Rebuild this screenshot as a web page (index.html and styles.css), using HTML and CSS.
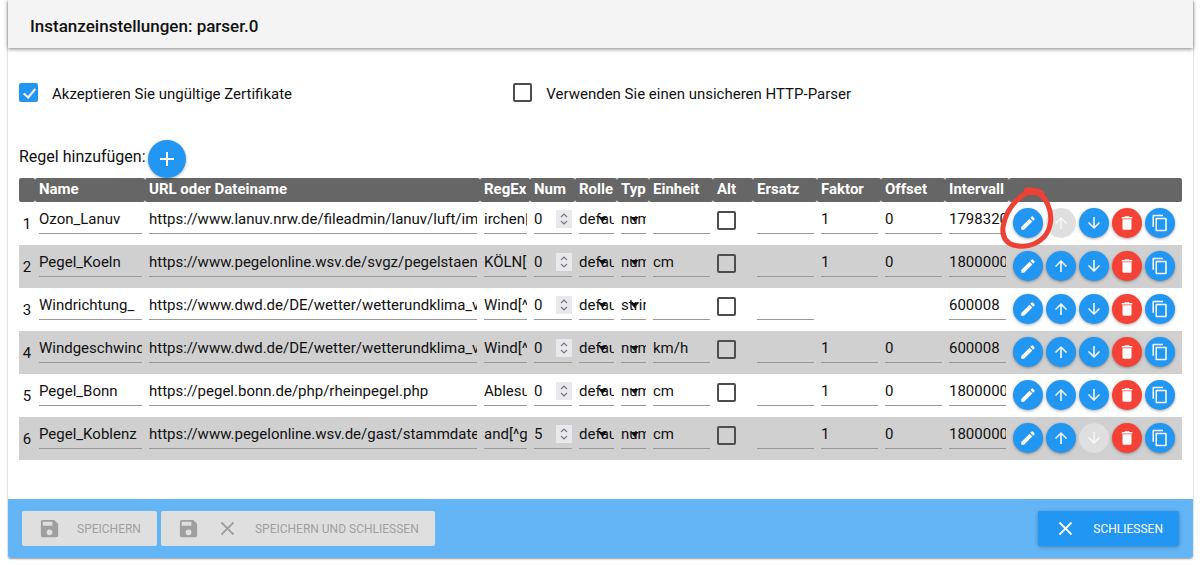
FILE: index.html
```html
<!DOCTYPE html>
<html lang="de">
<head>
<meta charset="utf-8">
<title>Instanzeinstellungen: parser.0</title>
<link rel="stylesheet" href="styles.css">
</head>
<body>
<svg class="sprite" aria-hidden="true">
  <symbol id="edit" viewBox="0 0 24 24"><path d="M3 17.25V21h3.75L17.81 9.94l-3.75-3.75L3 17.25zM20.71 7.04a1 1 0 0 0 0-1.41l-2.34-2.34a1 1 0 0 0-1.41 0l-1.83 1.83 3.75 3.75 1.83-1.83z"/></symbol>
  <symbol id="up" viewBox="0 0 24 24"><path d="M4 12l1.41 1.41L11 7.83V20h2V7.83l5.58 5.59L20 12l-8-8-8 8z"/></symbol>
  <symbol id="down" viewBox="0 0 24 24"><path d="M20 12l-1.41-1.41L13 16.17V4h-2v12.17l-5.58-5.59L4 12l8 8 8-8z"/></symbol>
  <symbol id="trash" viewBox="0 0 24 24"><path d="M6 19a2 2 0 0 0 2 2h8a2 2 0 0 0 2-2V7H6v12zM19 4h-3.5l-1-1h-5l-1 1H5v2h14V4z"/></symbol>
  <symbol id="copy" viewBox="0 0 24 24"><path d="M16 1H3a1 1 0 0 0-1 1v15h2V3h12V1zm4 4H7a1 1 0 0 0-1 1v16a1 1 0 0 0 1 1h13a1 1 0 0 0 1-1V6a1 1 0 0 0-1-1zm-1 16H8V7h11v14z"/></symbol>
  <symbol id="plus" viewBox="0 0 24 24"><path d="M19 13h-6v6h-2v-6H5v-2h6V5h2v6h6v2z"/></symbol>
  <symbol id="save" viewBox="0 0 24 24"><path d="M17 3H5a2 2 0 0 0-2 2v14a2 2 0 0 0 2 2h14a2 2 0 0 0 2-2V7l-4-4zm-5 16a3 3 0 1 1 0-6 3 3 0 0 1 0 6zm3-10H5V5h10v4z"/></symbol>
  <symbol id="close" viewBox="0 0 24 24"><path d="M19 6.41L17.59 5 12 10.59 6.41 5 5 6.41 10.59 12 5 17.59 6.41 19 12 13.41 17.59 19 19 17.59 13.41 12z"/></symbol>
  <symbol id="spin" viewBox="0 0 16 18"><path d="M5 7l3-3 3 3M5 11l3 3 3-3" fill="none" stroke="#77777c" stroke-width="1.2"/></symbol>
  <symbol id="caret" viewBox="0 0 10 6"><path d="M0 0h10L5 6z"/></symbol>
</svg>
<main class="card">
  <header class="title"><h1>Instanzeinstellungen: parser.0</h1></header>
  <section class="content">
    <div class="options">
      <label class="option"><input class="check" type="checkbox" checked><span>Akzeptieren Sie ungültige Zertifikate</span></label>
      <label class="option"><input class="check" type="checkbox"><span>Verwenden Sie einen unsicheren HTTP-Parser</span></label>
    </div>
    <div class="add"><span id="add-label">Regel hinzufügen:</span><button class="round large" aria-labelledby="add-label"><svg><use href="#plus"/></svg></button></div>
    <table class="rules">
      <colgroup><col class="c-no"><col class="c-name"><col><col class="c-regex"><col class="c-num"><col class="c-role"><col class="c-type"><col class="c-std"><col class="c-alt"><col class="c-std"><col class="c-std"><col class="c-std"><col class="c-std"><col class="c-actions"></colgroup>
      <thead>
        <tr><th></th><th>Name</th><th>URL oder Dateiname</th><th>RegEx</th><th>Num</th><th>Rolle</th><th>Typ</th><th>Einheit</th><th>Alt</th><th>Ersatz</th><th>Faktor</th><th>Offset</th><th>Intervall</th><th></th></tr>
      </thead>
      <tbody>
        <tr>
          <td class="no">1</td>
          <td><input class="field" aria-label="Name" value="Ozon_Lanuv"></td>
          <td><input class="field" aria-label="URL oder Dateiname" value="https://www.lanuv.nrw.de/fileadmin/lanuv/luft/immissionen/aktluftqual/eu_luftqualitaet.htm"></td>
          <td><input class="field" aria-label="RegEx" value="irchen|"></td>
          <td><div class="wrap"><input class="field" type="number" aria-label="Num" value="0"><svg class="spin"><use href="#spin"/></svg></div></td>
          <td><div class="wrap"><select class="field" aria-label="Rolle"><option>default</option></select><svg class="caret"><use href="#caret"/></svg></div></td>
          <td><div class="wrap"><select class="field" aria-label="Typ"><option>number</option></select><svg class="caret"><use href="#caret"/></svg></div></td>
          <td><input class="field" aria-label="Einheit" value=""></td>
          <td><input class="check" type="checkbox" aria-label="Alt"></td>
          <td><input class="field" aria-label="Ersatz" value=""></td>
          <td><input class="field" aria-label="Faktor" value="1"></td>
          <td><input class="field" aria-label="Offset" value="0"></td>
          <td><input class="field" aria-label="Intervall" value="17983200"></td>
          <td><div class="actions"><button class="round" aria-label="Bearbeiten"><svg><use href="#edit"/></svg></button><button class="round" aria-label="Nach oben" disabled><svg><use href="#up"/></svg></button><button class="round" aria-label="Nach unten"><svg><use href="#down"/></svg></button><button class="round red" aria-label="Löschen"><svg><use href="#trash"/></svg></button><button class="round" aria-label="Kopieren"><svg><use href="#copy"/></svg></button>
            <svg class="marker" viewBox="0 0 54 64" aria-hidden="true"><path d="M42 7C36 3 29 5 23 9C12 17 5 29 3 41C2 50 5 56 13 59C25 62 36 59 44 51C51 43 53 31 48 19C45 11 39 6 31 4C26 3 24 5 29 6C34 8 38 5 41 7"/></svg></div></td>
        </tr>
        <tr>
          <td class="no">2</td>
          <td><input class="field" aria-label="Name" value="Pegel_Koeln"></td>
          <td><input class="field" aria-label="URL oder Dateiname" value="https://www.pegelonline.wsv.de/svgz/pegelstaende_neu.svgz"></td>
          <td><input class="field" aria-label="RegEx" value="KÖLN[^"></td>
          <td><div class="wrap"><input class="field" type="number" aria-label="Num" value="0"><svg class="spin"><use href="#spin"/></svg></div></td>
          <td><div class="wrap"><select class="field" aria-label="Rolle"><option>default</option></select><svg class="caret"><use href="#caret"/></svg></div></td>
          <td><div class="wrap"><select class="field" aria-label="Typ"><option>number</option></select><svg class="caret"><use href="#caret"/></svg></div></td>
          <td><input class="field" aria-label="Einheit" value="cm"></td>
          <td><input class="check" type="checkbox" aria-label="Alt"></td>
          <td><input class="field" aria-label="Ersatz" value=""></td>
          <td><input class="field" aria-label="Faktor" value="1"></td>
          <td><input class="field" aria-label="Offset" value="0"></td>
          <td><input class="field" aria-label="Intervall" value="18000000"></td>
          <td><div class="actions"><button class="round" aria-label="Bearbeiten"><svg><use href="#edit"/></svg></button><button class="round" aria-label="Nach oben"><svg><use href="#up"/></svg></button><button class="round" aria-label="Nach unten"><svg><use href="#down"/></svg></button><button class="round red" aria-label="Löschen"><svg><use href="#trash"/></svg></button><button class="round" aria-label="Kopieren"><svg><use href="#copy"/></svg></button></div></td>
        </tr>
        <tr>
          <td class="no">3</td>
          <td><input class="field" aria-label="Name" value="Windrichtung_"></td>
          <td><input class="field" aria-label="URL oder Dateiname" value="https://www.dwd.de/DE/wetter/wetterundklima_vorort/"></td>
          <td><input class="field" aria-label="RegEx" value="Wind[^"></td>
          <td><div class="wrap"><input class="field" type="number" aria-label="Num" value="0"><svg class="spin"><use href="#spin"/></svg></div></td>
          <td><div class="wrap"><select class="field" aria-label="Rolle"><option>default</option></select><svg class="caret"><use href="#caret"/></svg></div></td>
          <td><div class="wrap"><select class="field" aria-label="Typ"><option>string</option></select><svg class="caret"><use href="#caret"/></svg></div></td>
          <td><input class="field" aria-label="Einheit" value=""></td>
          <td><input class="check" type="checkbox" aria-label="Alt"></td>
          <td><input class="field" aria-label="Ersatz" value=""></td>
          <td></td>
          <td></td>
          <td><input class="field" aria-label="Intervall" value="600008"></td>
          <td><div class="actions"><button class="round" aria-label="Bearbeiten"><svg><use href="#edit"/></svg></button><button class="round" aria-label="Nach oben"><svg><use href="#up"/></svg></button><button class="round" aria-label="Nach unten"><svg><use href="#down"/></svg></button><button class="round red" aria-label="Löschen"><svg><use href="#trash"/></svg></button><button class="round" aria-label="Kopieren"><svg><use href="#copy"/></svg></button></div></td>
        </tr>
        <tr>
          <td class="no">4</td>
          <td><input class="field" aria-label="Name" value="Windgeschwindigkeit"></td>
          <td><input class="field" aria-label="URL oder Dateiname" value="https://www.dwd.de/DE/wetter/wetterundklima_vorort/"></td>
          <td><input class="field" aria-label="RegEx" value="Wind[^"></td>
          <td><div class="wrap"><input class="field" type="number" aria-label="Num" value="0"><svg class="spin"><use href="#spin"/></svg></div></td>
          <td><div class="wrap"><select class="field" aria-label="Rolle"><option>default</option></select><svg class="caret"><use href="#caret"/></svg></div></td>
          <td><div class="wrap"><select class="field" aria-label="Typ"><option>number</option></select><svg class="caret"><use href="#caret"/></svg></div></td>
          <td><input class="field" aria-label="Einheit" value="km/h"></td>
          <td><input class="check" type="checkbox" aria-label="Alt"></td>
          <td><input class="field" aria-label="Ersatz" value=""></td>
          <td><input class="field" aria-label="Faktor" value="1"></td>
          <td><input class="field" aria-label="Offset" value="0"></td>
          <td><input class="field" aria-label="Intervall" value="600008"></td>
          <td><div class="actions"><button class="round" aria-label="Bearbeiten"><svg><use href="#edit"/></svg></button><button class="round" aria-label="Nach oben"><svg><use href="#up"/></svg></button><button class="round" aria-label="Nach unten"><svg><use href="#down"/></svg></button><button class="round red" aria-label="Löschen"><svg><use href="#trash"/></svg></button><button class="round" aria-label="Kopieren"><svg><use href="#copy"/></svg></button></div></td>
        </tr>
        <tr>
          <td class="no">5</td>
          <td><input class="field" aria-label="Name" value="Pegel_Bonn"></td>
          <td><input class="field" aria-label="URL oder Dateiname" value="https://pegel.bonn.de/php/rheinpegel.php"></td>
          <td><input class="field" aria-label="RegEx" value="Ablesung"></td>
          <td><div class="wrap"><input class="field" type="number" aria-label="Num" value="0"><svg class="spin"><use href="#spin"/></svg></div></td>
          <td><div class="wrap"><select class="field" aria-label="Rolle"><option>default</option></select><svg class="caret"><use href="#caret"/></svg></div></td>
          <td><div class="wrap"><select class="field" aria-label="Typ"><option>number</option></select><svg class="caret"><use href="#caret"/></svg></div></td>
          <td><input class="field" aria-label="Einheit" value="cm"></td>
          <td><input class="check" type="checkbox" aria-label="Alt"></td>
          <td><input class="field" aria-label="Ersatz" value=""></td>
          <td><input class="field" aria-label="Faktor" value="1"></td>
          <td><input class="field" aria-label="Offset" value="0"></td>
          <td><input class="field" aria-label="Intervall" value="18000000"></td>
          <td><div class="actions"><button class="round" aria-label="Bearbeiten"><svg><use href="#edit"/></svg></button><button class="round" aria-label="Nach oben"><svg><use href="#up"/></svg></button><button class="round" aria-label="Nach unten"><svg><use href="#down"/></svg></button><button class="round red" aria-label="Löschen"><svg><use href="#trash"/></svg></button><button class="round" aria-label="Kopieren"><svg><use href="#copy"/></svg></button></div></td>
        </tr>
        <tr>
          <td class="no">6</td>
          <td><input class="field" aria-label="Name" value="Pegel_Koblenz"></td>
          <td><input class="field" aria-label="URL oder Dateiname" value="https://www.pegelonline.wsv.de/gast/stammdaten?pegelnr=25900700"></td>
          <td><input class="field" aria-label="RegEx" value="and[^g"></td>
          <td><div class="wrap"><input class="field" type="number" aria-label="Num" value="5"><svg class="spin"><use href="#spin"/></svg></div></td>
          <td><div class="wrap"><select class="field" aria-label="Rolle"><option>default</option></select><svg class="caret"><use href="#caret"/></svg></div></td>
          <td><div class="wrap"><select class="field" aria-label="Typ"><option>number</option></select><svg class="caret"><use href="#caret"/></svg></div></td>
          <td><input class="field" aria-label="Einheit" value="cm"></td>
          <td><input class="check" type="checkbox" aria-label="Alt"></td>
          <td><input class="field" aria-label="Ersatz" value=""></td>
          <td><input class="field" aria-label="Faktor" value="1"></td>
          <td><input class="field" aria-label="Offset" value="0"></td>
          <td><input class="field" aria-label="Intervall" value="18000000"></td>
          <td><div class="actions"><button class="round" aria-label="Bearbeiten"><svg><use href="#edit"/></svg></button><button class="round" aria-label="Nach oben"><svg><use href="#up"/></svg></button><button class="round" aria-label="Nach unten" disabled><svg><use href="#down"/></svg></button><button class="round red" aria-label="Löschen"><svg><use href="#trash"/></svg></button><button class="round" aria-label="Kopieren"><svg><use href="#copy"/></svg></button></div></td>
        </tr>
      </tbody>
    </table>
  </section>
  <footer class="footer">
    <button class="btn" disabled><svg><use href="#save"/></svg><span>SPEICHERN</span></button>
    <button class="btn" disabled><svg><use href="#save"/></svg><svg><use href="#close"/></svg><span>SPEICHERN UND SCHLIESSEN</span></button>
    <button class="btn primary"><svg><use href="#close"/></svg><span>SCHLIESSEN</span></button>
  </footer>
</main>
</body>
</html>
```
FILE: styles.css
```css
* { box-sizing: border-box; }
body {
  margin: 0;
  padding: 0 7px 7px 8px;
  background: #fff;
  color: #111;
  font: 15px/20px Roboto, "Liberation Sans", sans-serif;
}
button, input, select { font: inherit; color: inherit; margin: 0; }
svg { display: block; fill: currentColor; }
.sprite { display: none; }

.card {
  border-radius: 0 0 3px 3px;
  box-shadow: 0 1px 2px rgba(0, 0, 0, .4);
}
.title {
  padding: 16px 22px 12px;
  background: #f4f4f4;
  box-shadow: 0 1px 4px rgba(0, 0, 0, .5);
}
.title h1 { margin: 0; font-size: 17px; line-height: 20px; font-weight: 500; }

.content { padding: 35px 11px 39px; }
.options { display: grid; grid-template-columns: 17fr 23fr; }
.option { display: flex; align-items: flex-start; gap: 14px; }
.option span { padding-top: 1px; }

.check {
  appearance: none;
  display: block;
  flex: none;
  width: 19px;
  height: 19px;
  border: 2px solid #4d4d4d;
  border-radius: 2px;
}
.check:checked { border-color: #2196f3; background: #2196f3; }
.check:checked::after {
  content: "";
  display: block;
  width: 5px;
  height: 10px;
  margin: 1px 0 0 5px;
  border: solid #fff;
  border-width: 0 2px 2px 0;
  transform: rotate(40deg);
}

.add { display: flex; align-items: center; gap: 2px; padding-top: 36px; font-size: 16px; }
.add span { padding-bottom: 4px; }

.round {
  display: flex;
  flex: none;
  align-items: center;
  justify-content: center;
  width: 30px;
  height: 30px;
  padding: 0;
  border: 0;
  border-radius: 50%;
  background: #2196f3;
  color: #fff;
  box-shadow: 0 1px 3px rgba(0, 0, 0, .35);
}
.round svg { width: 18px; height: 18px; }
.round.large { width: 38px; height: 38px; }
.round.large svg { width: 24px; height: 24px; }
.round.red { background: #f44336; }
.round:disabled { background: #dfdfdf; color: #f8f8f8; box-shadow: none; }

.rules { width: 100%; table-layout: fixed; border-collapse: separate; border-spacing: 0; }
.c-no { width: 16px; }
.c-name { width: 110px; }
.c-regex { width: 50px; }
.c-num { width: 45px; }
.c-role { width: 42px; }
.c-type { width: 32px; }
.c-std { width: 64px; }
.c-alt { width: 40px; }
.c-actions { width: 173px; }
.rules th {
  height: 24px;
  padding: 0 0 2px 4px;
  border-radius: 2px;
  background: #666;
  color: #fff;
  font-weight: 700;
  text-align: left;
  white-space: nowrap;
}
.rules td { height: 43px; padding: 3px 3px 0 4px; vertical-align: top; }
.rules tbody tr:nth-child(even) { background: #d0d0d0; }
.rules td.no { padding: 0; text-align: center; vertical-align: middle; }
.rules .check { margin-top: 6px; }
.field {
  appearance: none;
  display: block;
  width: 100%;
  height: 29px;
  padding: 0;
  border: 0;
  border-bottom: 1px solid #999;
  border-radius: 0;
  outline: 0;
  background: transparent;
}
.field[type="number"] { appearance: textfield; }
.field::-webkit-inner-spin-button { display: none; }
.wrap { position: relative; }
.spin { position: absolute; top: 5px; right: 0; width: 16px; height: 18px; background: #e9e9ed; }
.caret { position: absolute; top: 12px; right: 7px; width: 9px; height: 5px; pointer-events: none; }
.actions { position: relative; display: flex; gap: 3px; padding-top: 3px; }
.marker {
  position: absolute;
  top: -19px;
  left: -13px;
  width: 54px;
  height: 64px;
  fill: none;
  stroke: #ee4035;
  stroke-width: 5;
  stroke-linecap: round;
  pointer-events: none;
}

.footer {
  display: flex;
  align-items: center;
  gap: 4px;
  padding: 12px 14px;
  border-radius: 0 0 3px 3px;
  background: #64b5f6;
}
.btn {
  display: flex;
  align-items: center;
  gap: 16px;
  height: 35px;
  padding: 0 16px;
  border: 0;
  border-radius: 2px;
  background: #dfdfdf;
  color: #9f9f9f;
  font-size: 12px;
}
.btn svg { width: 23px; height: 23px; }
.btn.primary {
  margin-left: auto;
  background: #2196f3;
  color: #fff;
  box-shadow: 0 1px 4px rgba(0, 0, 0, .3);
}
```
